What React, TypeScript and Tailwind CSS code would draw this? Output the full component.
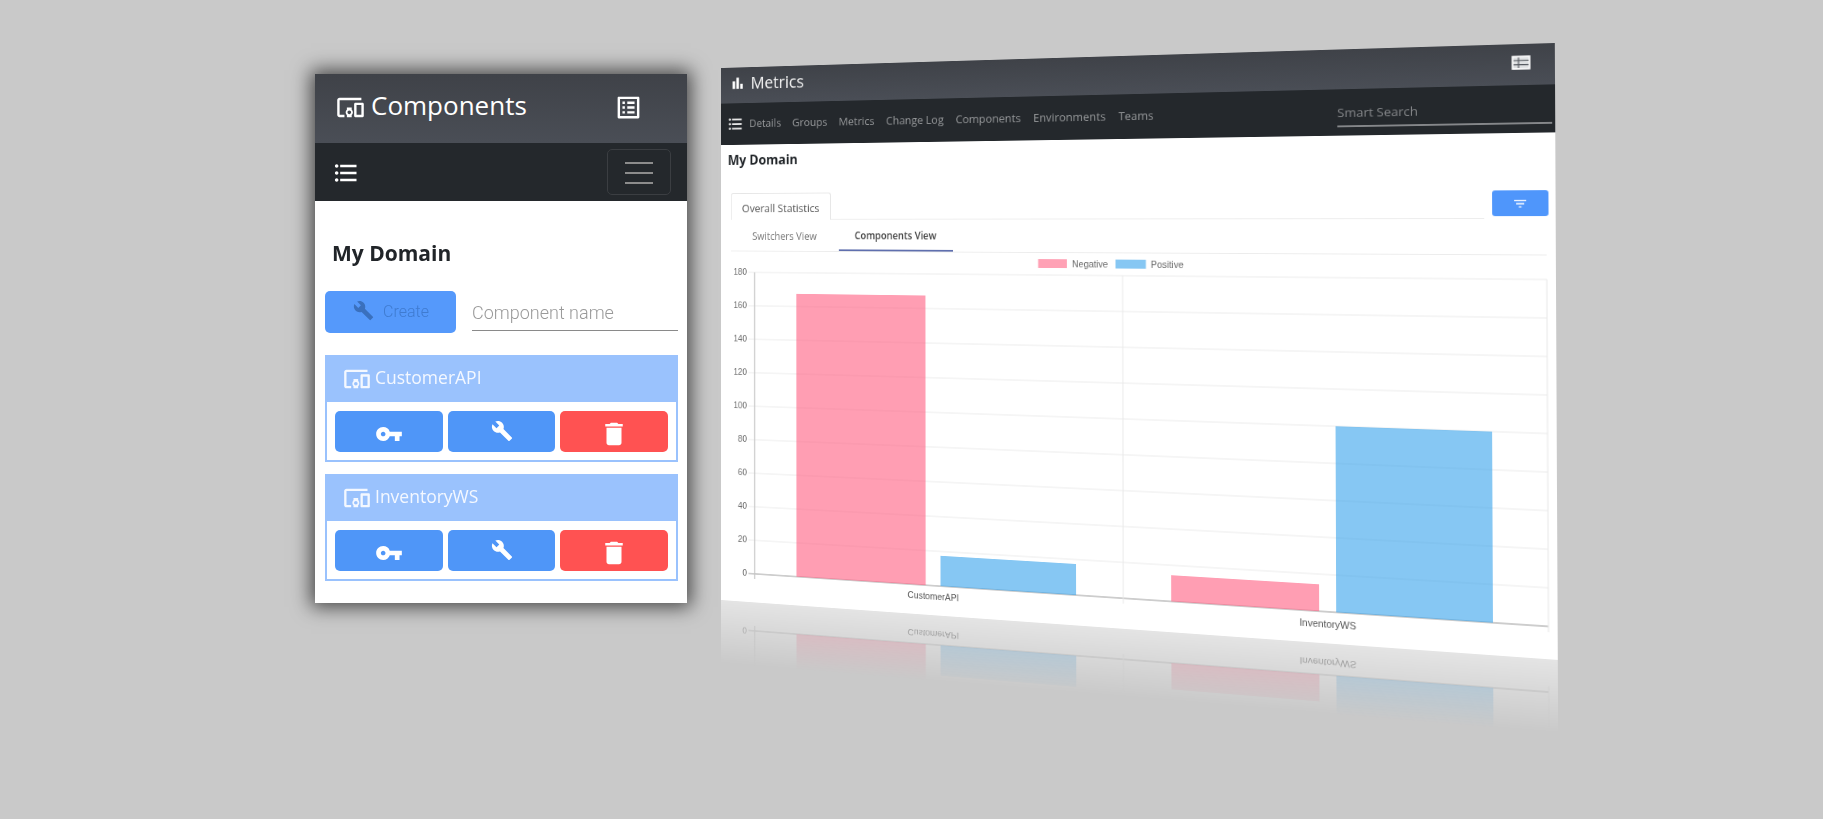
import React from "react";
import {
  MdDevicesOther,
  MdListAlt,
  MdFormatListBulleted,
  MdVpnKey,
  MdBuild,
  MdDelete,
  MdBarChart,
  MdFilterList,
} from "react-icons/md";

const W = 950;
const H = 640;

// Projective map of the flat W x H page on to the tilted quad of the picture.
function quadMatrix(q: number[][]): string {
  const [[x0, y0], [x1, y1], [x2, y2], [x3, y3]] = q;
  const dx1 = x1 - x2, dx2 = x3 - x2, dy1 = y1 - y2, dy2 = y3 - y2;
  const sx = x0 - x1 + x2 - x3, sy = y0 - y1 + y2 - y3;
  const det = dx1 * dy2 - dx2 * dy1;
  const g = (sx * dy2 - dx2 * sy) / det;
  const h = (dx1 * sy - sx * dy1) / det;
  const a = x1 - x0 + g * x1, b = x3 - x0 + h * x3;
  const d = y1 - y0 + g * y1, e = y3 - y0 + h * y3;
  return `matrix3d(${[a / W, d / W, 0, g / W, b / H, e / H, 0, h / H, 0, 0, 1, 0, x0, y0, 0, 1].join(",")})`;
}

const QUAD = [
  [721, 68],
  [1555, 43],
  [1558, 660],
  [721, 600],
];

const NAV = ["Details", "Groups", "Metrics", "Change Log", "Components", "Environments", "Teams"];

const y = (v: number) => 606 - v * 2;
const BARS = [
  { x: 98, w: 161.5, v: 167.5, c: "rgba(255,99,132,0.62)" },
  { x: 277.5, w: 160.5, v: 17.5, c: "rgba(54,162,235,0.6)" },
  { x: 546, w: 161, v: 14.5, c: "rgba(255,99,132,0.62)" },
  { x: 725, w: 161, v: 100, c: "rgba(54,162,235,0.6)" },
];

function ChartBody() {
  return (
    <>
      <line x1={44} x2={44} y1={246} y2={612} stroke="#c4c4c4" strokeWidth={1.5} />
      <line x1={492} x2={492} y1={246} y2={612} stroke="#e8e8e8" />
      <line x1={941} x2={941} y1={246} y2={612} stroke="#e8e8e8" />
      {BARS.map((b) => (
        <rect key={b.x} x={b.x} y={y(b.v)} width={b.w} height={b.v * 2} fill={b.c} />
      ))}
      <text x={268.5} y={622} fontSize={10.5} fill="#555" textAnchor="middle">CustomerAPI</text>
      <text x={716} y={623} fontSize={10.5} fill="#555" textAnchor="middle">InventoryWS</text>
    </>
  );
}

function Chart() {
  const ticks = [180, 160, 140, 120, 100, 80, 60, 40, 20, 0];
  return (
    <svg width={950} height={419} viewBox="0 221 950 419" className="block font-['Liberation_Sans',sans-serif]">
      <rect x={394.5} y={228} width={33.5} height={10} fill="#ffa1b5" />
      <text x={434} y={237} fontSize={10.5} fill="#666">Negative</text>
      <rect x={484} y={228} width={34.5} height={10} fill="#86c7f3" />
      <text x={524} y={237} fontSize={10.5} fill="#666">Positive</text>
      {ticks.map((t) => (
        <g key={t}>
          <line x1={36} x2={941} y1={y(t)} y2={y(t)} stroke={t === 0 ? "#bdbdbd" : "#ebebeb"} strokeWidth={t === 0 ? 1.5 : 1} />
          <text x={34} y={y(t) + 3.5} fontSize={10.5} fill="#666" textAnchor="end">{t}</text>
        </g>
      ))}
      <ChartBody />
    </svg>
  );
}

// The reflection under the tilted page: only the foot of the chart, upside down.
function ChartFoot() {
  return (
    <svg width={950} height={76} viewBox="0 564 950 76" className="block bg-white font-['Liberation_Sans',sans-serif] [transform:scaleY(-1)]">
      <line x1={36} x2={941} y1={y(20)} y2={y(20)} stroke="#ebebeb" />
      <line x1={36} x2={941} y1={y(0)} y2={y(0)} stroke="#bdbdbd" strokeWidth={1.5} />
      <text x={34} y={y(0) + 3.5} fontSize={10.5} fill="#666" textAnchor="end">0</text>
      <ChartBody />
    </svg>
  );
}

function TableGlyph() {
  return (
    <svg width={19} height={15} viewBox="0 0 19 15" className="ml-auto mt-[2px]">
      <rect x={1} y={1} width={17} height={13} fill="#dfe1e3" stroke="#ffffff" strokeWidth={1.6} />
      <path d="M2 5.3h15M2 9.6h15M7 2v11" stroke="#53575e" strokeWidth={1.1} fill="none" />
    </svg>
  );
}

function FlatPage() {
  return (
    <div className="w-[950px] h-[640px] bg-white flex flex-col font-['Open_Sans',sans-serif] overflow-hidden">
      <div className="h-[43px] shrink-0 flex items-center bg-gradient-to-b from-[#3f4248] to-[#4a4e56] pl-[12px] pr-[24px] pb-[6px] text-white">
        <MdBarChart size={20} />
        <span className="ml-[7px] text-[20px] leading-none text-[#f2f2f2]">Metrics</span>
        <TableGlyph />
      </div>
      <div className="h-[50px] shrink-0 flex items-center bg-[#24282c] pl-[8px] pr-[3px] text-[13px] text-[#96989a]">
        <MdFormatListBulleted size={22} className="text-[#e8e8e8] mr-[7px]" />
        <div className="flex gap-[14.5px]">
          {NAV.map((n) => (
            <span key={n}>{n}</span>
          ))}
        </div>
        <div className="ml-auto w-[219px] h-[32px] pt-[6px] border-b-[2px] border-[#85878a] text-[13.5px] leading-[20px] text-[#85878a]">
          Smart Search
        </div>
      </div>
      <div className="pl-[9px] pt-[6px] h-[58px] shrink-0 text-[16px] leading-[24px] font-bold text-[#212529]">My Domain</div>
      <div className="ml-[13px] w-[930px] h-[32px] shrink-0 flex">
        <div className="w-[129px] h-[32px] pt-[4px] border border-b-0 border-[#e6e6e6] rounded-t-[3px] flex items-center justify-center text-[13px] text-[#555]">
          Overall Statistics
        </div>
        <div className="w-[737px] border-b border-[#ececec]" />
        <div className="ml-[8px] w-[56px] h-[27px] mt-[2px] rounded-[3px] bg-[#4f96fb] flex items-center justify-center text-white">
          <MdFilterList size={16} />
        </div>
      </div>
      <div className="ml-[13px] w-[928px] h-[38px] shrink-0 flex border-b border-[#ececec] text-[12px]">
        <div className="w-[139px] pt-[3px] flex items-center justify-center text-[#777]">Switchers View</div>
        <div className="w-[141px] pt-[3px] flex items-center justify-center font-semibold text-[11.6px] text-[#444] border-b-[2px] border-[#5f6fae]">Components View</div>
      </div>
      <Chart />
    </div>
  );
}

function TiltedWindow() {
  return (
    <div
      className="absolute left-0 top-0 w-[950px] h-[640px] origin-top-left blur-[0.6px]"
      style={{ transform: quadMatrix(QUAD) }}
    >
      <FlatPage />
      <div className="w-[950px] h-[76px] overflow-hidden [mask-image:linear-gradient(to_bottom,rgba(0,0,0,0.5),rgba(0,0,0,0))]">
        <ChartFoot />
      </div>
    </div>
  );
}

function CardRow({ name }: { name: string }) {
  return (
    <div className="w-[353px] h-[107px] border-2 border-[#9ac2fd] bg-white flex flex-col">
      <div className="h-[45px] shrink-0 bg-[#9ac2fd] flex items-center pl-[16px] pb-[1px] text-[#f4f8ff]">
        <MdDevicesOther size={28} />
        <span className="ml-[4px] text-[17.5px] leading-none pb-[3px]">{name}</span>
      </div>
      <div className="flex gap-[5px] px-[8px] pt-[9px]">
        <button className="flex-1 h-[41px] rounded-[5px] bg-[#4f96f8] flex items-center justify-center text-white pt-[4px]">
          <MdVpnKey size={28} />
        </button>
        <button className="flex-1 h-[41px] rounded-[5px] bg-[#4f96f8] flex items-center justify-center text-white pb-[2px]">
          <MdBuild size={22} />
        </button>
        <button className="flex-1 h-[41px] rounded-[5px] bg-[#ff5252] flex items-center justify-center text-white pt-[4px]">
          <MdDelete size={30} />
        </button>
      </div>
    </div>
  );
}

function PhoneWindow() {
  return (
    <div className="w-[372px] h-[529px] bg-white flex flex-col shadow-[0_0_18px_4px_rgba(0,0,0,0.65)] font-['Open_Sans',sans-serif] blur-[0.3px]">
      <div className="h-[69px] shrink-0 flex items-center bg-gradient-to-b from-[#3f4248] to-[#4a4e56] pl-[21px] pb-[2px] text-white">
        <MdDevicesOther size={29} />
        <span className="ml-[6px] text-[26px] leading-none pb-[6px]">Components</span>
        <MdListAlt size={29} className="ml-[87px]" />
      </div>
      <div className="h-[58px] shrink-0 flex items-center justify-between bg-[#24282c] pl-[17px] pr-[16px] text-white">
        <MdFormatListBulleted size={28} className="mt-[2px]" />
        <div className="w-[64px] h-[46px] rounded-[5px] border border-[#3b3e42] flex flex-col items-center justify-center gap-[8px] pt-[1px]">
          <span className="block w-[28px] h-[2px] bg-[#8c8c8c]" />
          <span className="block w-[28px] h-[2px] bg-[#8c8c8c]" />
          <span className="block w-[28px] h-[2px] bg-[#8c8c8c]" />
        </div>
      </div>
      <div className="flex flex-col pl-[10px] pr-[9px]">
        <div className="pl-[7px] pt-[36px] h-[90px] text-[21px] leading-[32px] font-bold text-[#212529]">My Domain</div>
        <div className="flex h-[42px] mb-[22px]">
          <button className="w-[131px] h-[42px] rounded-[5px] bg-[#5599fb] flex items-center justify-center gap-[9px] pl-[1px] text-[#3f7bd0] font-['Roboto',sans-serif] font-light text-[16px]">
            <MdBuild size={21} className="-mt-[4px] text-[#3a70bd]" />
            Create
          </button>
          <input
            placeholder="Component name"
            className="ml-[16px] w-[206px] h-[40px] pt-[3px] border-b border-[#8a8a8a] bg-transparent outline-none font-['Roboto',sans-serif] font-light text-[18px] placeholder:text-[#9a9a9a]"
          />
        </div>
        <div className="flex flex-col gap-[12px]">
          <CardRow name="CustomerAPI" />
          <CardRow name="InventoryWS" />
        </div>
      </div>
    </div>
  );
}

export default function App() {
  return (
    <div className="relative w-[1823px] h-[819px] overflow-hidden bg-[#c9c9c9] pl-[315px] pt-[74px]">
      <PhoneWindow />
      <TiltedWindow />
    </div>
  );
}
